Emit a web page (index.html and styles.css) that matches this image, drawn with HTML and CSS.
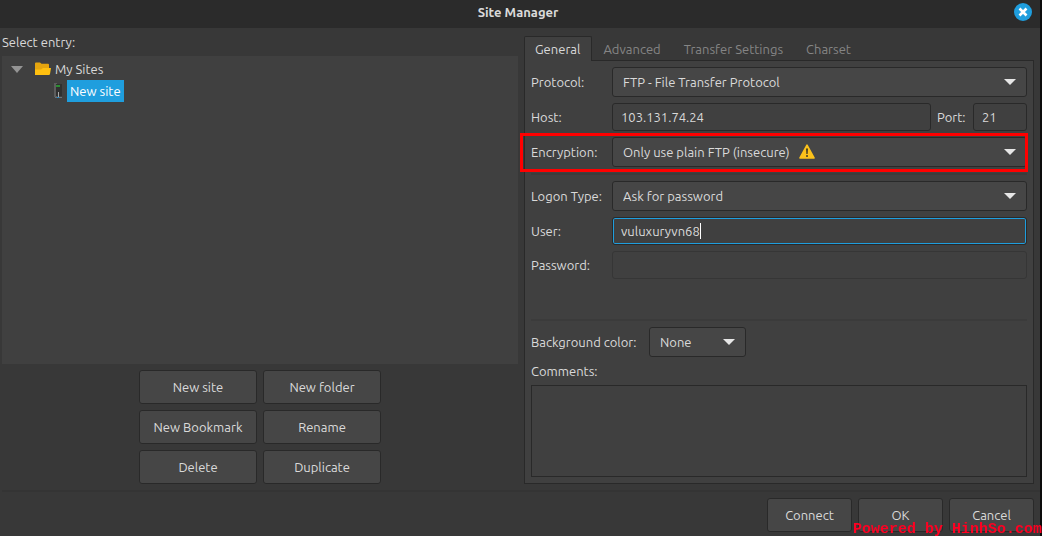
FILE: index.html
```html
<!DOCTYPE html>
<html lang="en">
<head>
    <meta charset="UTF-8">
    <meta name="viewport" content="width=device-width, initial-scale=1.0">
    <title>Site Manager</title>
    <link rel="stylesheet" href="styles.css">
</head>
<body>
<div class="window">
    <header class="titlebar">
        <h1>Site Manager</h1>
        <button type="button" class="close" aria-label="Close">
            <svg width="18" height="18" viewBox="0 0 18 18">
                <circle cx="9" cy="9" r="9" fill="#1f9ede"/>
                <path d="M5.500 5.500l7 7M12.500 5.500l-7 7" stroke="#fff" stroke-width="2.600"/>
            </svg>
        </button>
    </header>

    <main class="content">
        <section class="sites">
            <h2>Select entry:</h2>
            <div class="tree">
                <div class="tree-row">
                    <svg class="expander" width="12" height="7" viewBox="0 0 12 7"><path d="M0 0h12L6 7z" fill="#949494"/></svg>
                    <svg width="16" height="14" viewBox="0 0 16 14">
                        <path d="M0 1.500Q0 .5 1 .5h4l1.500 1.200H13q1 0 1 1V13H1q-1 0-1-1z" fill="#e5a50f"/>
                        <path d="M0 13V7.500h6L8 6h8l-1 6q-.2 1-1.200 1z" fill="#ffc010"/>
                    </svg>
                    <span>My Sites</span>
                </div>
                <div class="tree-row child">
                    <svg width="8" height="16" viewBox="0 0 8 16">
                        <path d="M0 0h3v14H0z" fill="#5d5d5d"/>
                        <path d="M2 1h6v12H2z" fill="#303030"/>
                        <path d="M2 2h4v2H2z" fill="#2c8c32"/>
                        <path d="M4.500 9v5" stroke="#aaa"/>
                        <path d="M1 14.500h7" stroke="#68747c"/>
                        <path d="M3 14h2v1H3z" fill="#2588c8"/>
                    </svg>
                    <span class="selected">New site</span>
                </div>
            </div>
            <div class="site-buttons">
                <button type="button">New site</button>
                <button type="button">New folder</button>
                <button type="button">New Bookmark</button>
                <button type="button">Rename</button>
                <button type="button">Delete</button>
                <button type="button">Duplicate</button>
            </div>
        </section>

        <section class="settings">
            <nav class="tabs">
                <button type="button" class="tab active">General</button>
                <button type="button" class="tab">Advanced</button>
                <button type="button" class="tab">Transfer Settings</button>
                <button type="button" class="tab">Charset</button>
            </nav>
            <form class="panel">
                <div class="row">
                    <label for="protocol">Protocol:</label>
                    <div class="select">
                        <select id="protocol"><option>FTP - File Transfer Protocol</option></select>
                    </div>
                </div>
                <div class="row">
                    <label for="host">Host:</label>
                    <input type="text" id="host" value="103.131.74.24">
                    <label for="port" class="port-label">Port:</label>
                    <input type="text" id="port" class="port" value="21">
                </div>
                <div class="row highlight">
                    <label for="encryption">Encryption:</label>
                    <div class="select">
                        <select id="encryption"><option>Only use plain FTP (insecure)</option></select>
                        <svg class="warning" width="16" height="15" viewBox="0 0 16 15">
                            <path d="M8 1.200L15 14H1z" fill="#fcc21b" stroke="#fcc21b" stroke-width="1.600" stroke-linejoin="round"/>
                            <path d="M7 4.500h2L8.600 10H7.400z" fill="#403924"/>
                            <circle cx="8" cy="12" r="1" fill="#403924"/>
                        </svg>
                    </div>
                </div>
                <hr>
                <div class="row">
                    <label for="logon">Logon Type:</label>
                    <div class="select">
                        <select id="logon"><option>Ask for password</option></select>
                    </div>
                </div>
                <div class="row">
                    <label for="user">User:</label>
                    <div class="field">
                        <input type="text" id="user" class="focused" value="vuluxuryvn68">
                        <span class="caret"></span>
                    </div>
                </div>
                <div class="row">
                    <label for="password">Password:</label>
                    <input type="password" id="password" disabled>
                </div>
                <hr class="wide">
                <div class="row">
                    <label for="color" class="color-label">Background color:</label>
                    <div class="select small">
                        <select id="color"><option>None</option></select>
                    </div>
                </div>
                <label for="comments">Comments:</label>
                <textarea id="comments"></textarea>
            </form>
        </section>
    </main>

    <footer class="actions">
        <button type="button">Connect</button>
        <button type="button">OK</button>
        <button type="button">Cancel</button>
    </footer>
</div>
<div class="watermark">Powered by HinhSo.com</div>
</body>
</html>
```
FILE: styles.css
```css
* {
    box-sizing: border-box;
}
body {
    margin: 0;
    background-color: #0c0c0c;
    color: #dadada;
    font: 13px/20px Ubuntu, "Noto Sans", sans-serif;
}
h1, h2 {
    margin: 0;
    font-size: 13px;
}
button, input, select, textarea {
    margin: 0;
    font: inherit;
    color: inherit;
}
.window {
    display: flex;
    flex-direction: column;
    min-height: 100vh;
    margin-right: 2px;
    background-color: #383838;
}
.titlebar {
    position: relative;
    height: 28px;
    padding: 2px 6px 6px 2px;
    background-color: #2b2b2b;
    text-align: center;
}
.titlebar h1 {
    font-weight: 600;
}
.close {
    position: absolute;
    top: 3px;
    right: 8px;
    width: 18px;
    height: 18px;
    padding: 0;
    border: 0;
    background: none;
}
.close svg {
    display: block;
}
.content {
    display: flex;
    flex: 1;
    gap: 6px;
    padding: 4px 6px 6px 2px;
}
.sites {
    display: flex;
    flex: 516;
    flex-direction: column;
}
.sites h2 {
    height: 24px;
    font-weight: normal;
}
.tree {
    flex: 1;
    padding: 2px 8px;
    background-color: #404040;
}
.tree-row {
    display: flex;
    align-items: center;
    height: 22px;
    gap: 4px;
}
.expander {
    margin: 0 8px 0 1px;
}
.child {
    gap: 5px;
    padding-left: 44px;
}
.selected {
    padding: 1px 3px;
    background-color: #1f9ede;
    color: #fff;
}
.site-buttons {
    display: grid;
    grid-template-columns: 118px 118px;
    gap: 6px;
    justify-content: center;
    margin-top: 6px;
}
.site-buttons button, .actions button {
    height: 34px;
    padding: 0;
    border: 1px solid #292929;
    border-radius: 3px;
    background-color: #464646;
}
.settings {
    display: flex;
    flex: 510;
    flex-direction: column;
    padding-top: 4px;
}
.tabs {
    display: flex;
    height: 25px;
}
.tab {
    height: 24px;
    padding: 0 11px 0 10px;
    border: 1px solid transparent;
    border-bottom: 0;
    background: none;
    color: #858585;
}
.tab.active {
    position: relative;
    height: 25px;
    border-color: #292929;
    border-radius: 2px 2px 0 0;
    background-color: #404040;
    color: #dadada;
}
.panel {
    display: flex;
    flex: 1;
    flex-direction: column;
    gap: 6px;
    margin-top: -1px;
    padding: 6px;
    border: 1px solid #292929;
    background-color: #404040;
}
.row {
    display: flex;
    align-items: center;
    gap: 6px;
}
.row label {
    flex: 0 0 75px;
    white-space: nowrap;
}
.row .port-label {
    flex-basis: 30px;
}
.row .color-label {
    flex-basis: 112px;
}
.select, .field {
    position: relative;
    flex: 1;
}
.select select {
    display: block;
    width: 100%;
    height: 30px;
    padding: 0 10px;
    border: 1px solid #292929;
    border-radius: 3px;
    appearance: none;
    background-color: #464646;
}
.select::after {
    content: "";
    position: absolute;
    top: 12px;
    right: 11px;
    border: 6px solid transparent;
    border-top-color: #e6e6e6;
    border-bottom: 0;
    pointer-events: none;
}
.small {
    flex: 0 0 97px;
}
input {
    width: 100%;
    min-width: 0;
    height: 28px;
    padding: 0 8px;
    border: 1px solid #292929;
    border-radius: 3px;
    background-color: #404040;
}
.port {
    flex: 0 0 54px;
}
input:disabled {
    border-color: #363636;
}
.field input {
    display: block;
}
input.focused {
    box-shadow: inset 0 0 0 1px #1f9ede;
}
.caret {
    position: absolute;
    top: 6px;
    left: 88px;
    width: 1px;
    height: 16px;
    background-color: #fff;
}
.highlight {
    position: relative;
}
.highlight::after {
    content: "";
    position: absolute;
    inset: -4px -1px -5px -11px;
    border: 3px solid #f00;
    pointer-events: none;
}
.warning {
    position: absolute;
    top: 7px;
    left: 187px;
}
hr {
    width: 100%;
    height: 2px;
    margin: 0;
    border: 0;
    background-color: #3b3b3b;
}
.wide {
    margin-top: 34px;
}
.panel > label {
    height: 16px;
    line-height: 16px;
}
textarea {
    flex: 1;
    min-height: 92px;
    border: 1px solid #292929;
    background-color: #404040;
    resize: none;
}
.actions {
    display: flex;
    justify-content: flex-end;
    gap: 6px;
    margin-left: 2px;
    padding: 6px 6px 4px;
    border-top: 2px solid #343434;
}
.actions button {
    width: 85px;
}
.watermark {
    position: fixed;
    right: 0;
    bottom: 0;
    color: #ff0022;
    font: bold 15px/12px "Liberation Mono", monospace;
}
```
